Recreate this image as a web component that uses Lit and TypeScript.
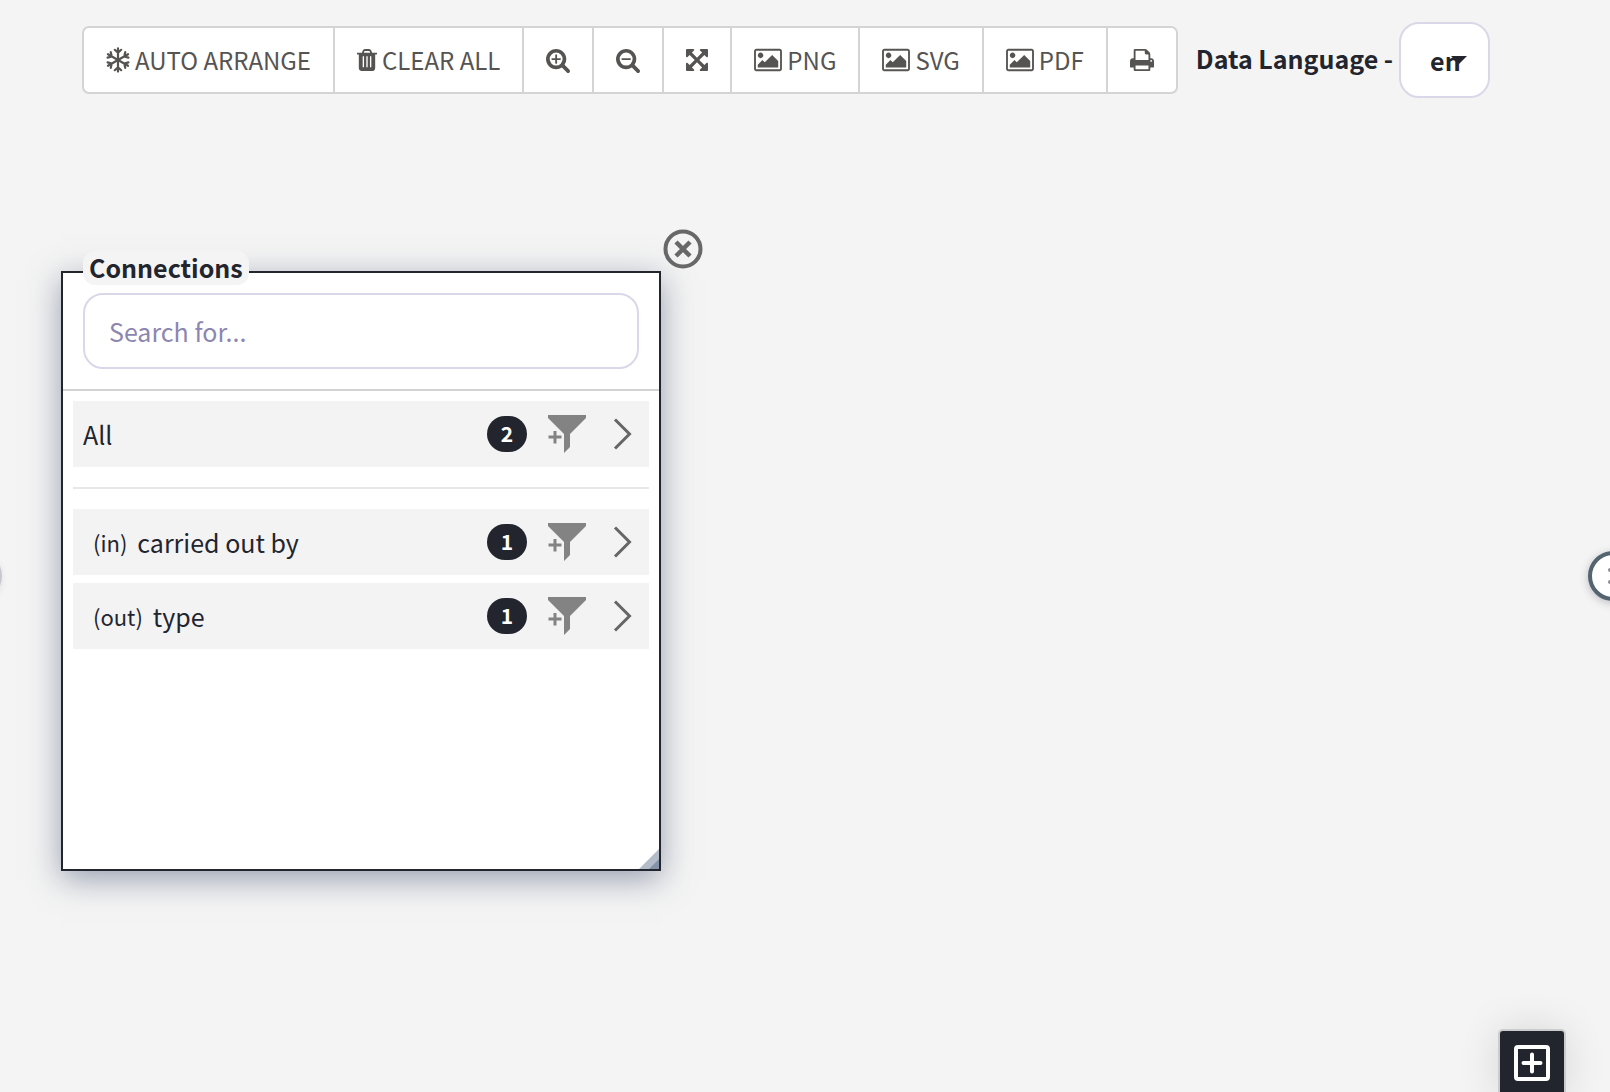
import { LitElement, html, css, svg } from "lit";
import { customElement, property, state } from "lit/decorators.js";

const glyphs = {
  trash: {
    box: "0 0 1408 1792",
    width: 20,
    d: "M496 1408v-768h-96v768zM752 1408v-768h-96v768zM1008 1408v-768h-96v768zM480 384h448l-48-117q-7-9-17-11h-317q-10 2-17 11zm928 32v64q0 14-9 23t-23 9h-96v948q0 83-47 143.5t-113 60.5h-832q-66 0-113-58.5t-47-141.5v-952h-96q-14 0-23-9t-9-23v-64q0-14 9-23t23-9h309l70-167q15-37 54-63t79-26h320q40 0 79 26t54 63l70 167h309q14 0 23 9t9 23z",
  },
  zoomIn: {
    box: "64 0 1664 1792",
    width: 24,
    d: "M1088 800v64q0 13-9.5 22.5t-22.5 9.5h-224v224q0 13-9.5 22.5t-22.5 9.5h-64q-13 0-22.5-9.5t-9.5-22.5v-224h-224q-13 0-22.5-9.5t-9.5-22.5v-64q0-13 9.5-22.5t22.5-9.5h224v-224q0-13 9.5-22.5t22.5-9.5h64q13 0 22.5 9.5t9.5 22.5v224h224q13 0 22.5 9.5t9.5 22.5zm128 32q0-185-131.5-316.5t-316.5-131.5-316.5 131.5-131.5 316.5 131.5 316.5 316.5 131.5 316.5-131.5 131.5-316.5zm512 832q0 53-37.5 90.5t-90.5 37.5q-54 0-90-38l-343-342q-179 124-399 124-143 0-273.5-55.5t-225-150-150-225-55.5-273.5 55.5-273.5 150-225 225-150 273.5-55.5 273.5 55.5 225 150 150 225 55.5 273.5q0 220-124 399l343 343q37 37 37 90z",
  },
  zoomOut: {
    box: "64 0 1664 1792",
    width: 24,
    d: "M1088 800v64q0 13-9.5 22.5t-22.5 9.5h-576q-13 0-22.5-9.5t-9.5-22.5v-64q0-13 9.5-22.5t22.5-9.5h576q13 0 22.5 9.5t9.5 22.5zm128 32q0-185-131.5-316.5t-316.5-131.5-316.5 131.5-131.5 316.5 131.5 316.5 316.5 131.5 316.5-131.5 131.5-316.5zm512 832q0 53-37.5 90.5t-90.5 37.5q-54 0-90-38l-343-342q-179 124-399 124-143 0-273.5-55.5t-225-150-150-225-55.5-273.5 55.5-273.5 150-225 225-150 273.5-55.5 273.5 55.5 225 150 150 225 55.5 273.5q0 220-124 399l343 343q37 37 37 90z",
  },
  expand: {
    box: "0 0 1536 1792",
    width: 22,
    d: "M1283 541l-355 355 355 355 144-144q29-31 70-14 39 17 39 59v448q0 26-19 45t-45 19h-448q-42 0-59-40-17-39 14-69l144-144-355-355-355 355 144 144q31 30 14 69-17 40-59 40h-448q-26 0-45-19t-19-45v-448q0-42 40-59 39-17 69 14l144 144 355-355-355-355-144 144q-19 19-45 19-12 0-24-5-40-17-40-59v-448q0-26 19-45t45-19h448q42 0 59 40 17 39-14 69l-144 144 355 355 355-355-144-144q-31-30-14-69 17-40 59-40h448q26 0 45 19t19 45v448q0 42-39 59-13 5-25 5-26 0-45-19z",
  },
  picture: {
    box: "0 0 1920 1792",
    width: 28,
    d: "M640 576q0 80-56 136t-136 56-136-56-56-136 56-136 136-56 136 56 56 136zm1024 384v448h-1408v-192l320-320 160 160 512-512zm96-704h-1600q-13 0-22.5 9.5t-9.5 22.5v1216q0 13 9.5 22.5t22.5 9.5h1600q13 0 22.5-9.5t9.5-22.5v-1216q0-13-9.5-22.5t-22.5-9.5zm160 32v1216q0 66-47 113t-113 47h-1600q-66 0-113-47t-47-113v-1216q0-66 47-113t113-47h1600q66 0 113 47t47 113z",
  },
  print: {
    box: "64 0 1664 1792",
    width: 24,
    d: "M448 1536h896v-256h-896v256zm0-640h896v-384h-160q-40 0-68-28t-28-68v-160h-640v640zm1152 64q0-26-19-45t-45-19-45 19-19 45 19 45 45 19 45-19 19-45zm128 0v416q0 13-9.5 22.5t-22.5 9.5h-224v160q0 40-28 68t-68 28h-960q-40 0-68-28t-28-68v-160h-224q-13 0-22.5-9.5t-9.5-22.5v-416q0-79 56.5-135.5t135.5-56.5h64v-544q0-40 28-68t68-28h672q40 0 88 20t76 48l152 152q28 28 48 76t20 88v256h64q79 0 135.5 56.5t56.5 135.5z",
  },
};

type GlyphName = keyof typeof glyphs;

const glyph = (name: GlyphName) => {
  const g = glyphs[name];
  return html`<svg width=${g.width} height="26" viewBox=${g.box} fill="currentColor" aria-hidden="true">
    <path d=${g.d}></path>
  </svg>`;
};

const snowflake = () => html`<svg width="24" height="26" viewBox="-12 -13 24 26" fill="none" stroke="currentColor" stroke-width="2.2" stroke-linecap="round" stroke-linejoin="round" aria-hidden="true">
  ${[0, 60, 120, 180, 240, 300].map(
    (a) => svg`<path transform="rotate(${a})" d="M0 0V-11.6M-3.2 -10.2L0 -7.2L3.2 -10.2"></path>`,
  )}
</svg>`;

const textFont = css`"Noto Sans CJK SC", "Noto Sans CJK JP", "Open Sans", sans-serif`;

@customElement("tool-bar")
class ToolBar extends LitElement {
  @state() private language = "en";

  static styles = css`
    :host {
      display: flex;
      align-items: center;
      gap: 18px;
      padding: 22px 20px 0 82px;
    }
    .group {
      display: flex;
      background: #fff;
      border: 2px solid #d4d4d4;
      border-radius: 7px;
    }
    .tool {
      display: flex;
      align-items: center;
      gap: 5px;
      height: 64px;
      margin: 0;
      padding: 0 22px;
      border: 0;
      border-left: 2px solid #d4d4d4;
      background: none;
      color: #555452;
      font: 24px/32px ${textFont};
      white-space: nowrap;
      cursor: pointer;
    }
    .tool:first-child {
      border-left: 0;
    }
    .tool svg {
      flex: none;
    }
    .language {
      display: flex;
      align-items: center;
      gap: 6px;
      color: #23252e;
      font: bold 25px/34px ${textFont};
      white-space: nowrap;
    }
    .language label {
      padding-bottom: 4px;
    }
    .picker {
      position: relative;
      display: flex;
    }
    select {
      appearance: none;
      width: 91px;
      height: 76px;
      padding: 0 0 0 29px;
      border: 2px solid #dad8e8;
      border-radius: 20px;
      background: #fff;
      color: inherit;
      font: inherit;
    }
    .caret {
      position: absolute;
      top: 34px;
      right: 23px;
      pointer-events: none;
    }
  `;

  render() {
    return html`
      <div class="group" role="toolbar" aria-label="Graph tools">
        <button class="tool" type="button">${snowflake()}AUTO ARRANGE</button>
        <button class="tool" type="button">${glyph("trash")}CLEAR ALL</button>
        <button class="tool" type="button" aria-label="Zoom in">${glyph("zoomIn")}</button>
        <button class="tool" type="button" aria-label="Zoom out">${glyph("zoomOut")}</button>
        <button class="tool" type="button" aria-label="Fit to screen">${glyph("expand")}</button>
        ${["PNG", "SVG", "PDF"].map(
          (kind) => html`<button class="tool" type="button">${glyph("picture")}${kind}</button>`,
        )}
        <button class="tool" type="button" aria-label="Print">${glyph("print")}</button>
      </div>
      <div class="language">
        <label for="language">Data Language -</label>
        <span class="picker">
          <select
            id="language"
            .value=${this.language}
            @change=${(e: Event) => (this.language = (e.target as HTMLSelectElement).value)}
          >
            <option value="en">en</option>
          </select>
          <svg class="caret" width="16" height="8" viewBox="0 0 16 8" fill="#23252e" aria-hidden="true">
            <path d="M0 0h16l-8 8z"></path>
          </svg>
        </span>
      </div>
    `;
  }
}

@customElement("connection-row")
class ConnectionRow extends LitElement {
  @property() direction = "";
  @property() label = "";
  @property({ type: Number }) count = 0;

  static styles = css`
    :host {
      display: flex;
      align-items: center;
      height: 66px;
      padding: 0 17px 0 10px;
      background: #f3f3f3;
      color: #23252e;
      font: 25px/34px ${textFont};
    }
    .name {
      flex: 1;
      display: flex;
      align-items: center;
      gap: 10px;
      min-width: 0;
    }
    .direction {
      padding-left: 10px;
      font-size: 22px;
      line-height: 32px;
    }
    .badge {
      min-width: 40px;
      height: 36px;
      border-radius: 18px;
      background: #23252e;
      color: #fff;
      font-size: 21px;
      font-weight: bold;
      line-height: 34px;
      text-align: center;
    }
    button {
      display: flex;
      margin: 0;
      padding: 0;
      border: 0;
      background: none;
      cursor: pointer;
    }
    .filter {
      margin: 0 26px 0 20px;
    }
  `;

  render() {
    return html`
      <span class="name">
        ${this.direction ? html`<span class="direction">(${this.direction})</span>` : null}
        <span>${this.label}</span>
      </span>
      <span class="badge">${this.count}</span>
      <button class="filter" type="button" aria-label="Add filter for ${this.label}">
        <svg width="40" height="40" viewBox="0 0 40 40" fill="#838383" aria-hidden="true">
          <path d="M1 1h38v3L23 20v13L17 39V20L1 4z"></path>
          <path d="M6.500 17h3v4.500h5v3h-5v5h-3v-5h-5v-3h5z"></path>
        </svg>
      </button>
      <button type="button" aria-label="Open ${this.label}">
        <svg width="19" height="34" viewBox="0 0 19 34" fill="none" stroke="#666" stroke-width="3" aria-hidden="true">
          <path d="M2 2.500L16.500 17L2 31.500"></path>
        </svg>
      </button>
    `;
  }
}

@customElement("connections-window")
class ConnectionsWindow extends LitElement {
  @state() private query = "";

  private rows = [
    { direction: "in", label: "carried out by", count: 1 },
    { direction: "out", label: "type", count: 1 },
  ];

  static styles = css`
    :host {
      display: block;
      position: relative;
      box-sizing: border-box;
      width: 600px;
      height: 600px;
      border: 2px solid #23252e;
      background: #fff;
      box-shadow: 0 8px 30px rgba(60, 76, 108, 0.5);
      color: #23252e;
      font: 25px/34px ${textFont};
    }
    h2 {
      position: absolute;
      top: -22px;
      left: 20px;
      margin: 0;
      padding: 0 6px 2px;
      border-radius: 12px;
      background: #f4f4f4;
      font: bold 25px/32px ${textFont};
    }
    .close {
      position: absolute;
      top: -44px;
      right: -44px;
      display: flex;
      margin: 0;
      padding: 0;
      border: 0;
      background: none;
      cursor: pointer;
    }
    .search {
      padding: 20px;
      border-bottom: 2px solid #d2d3d4;
    }
    input {
      display: block;
      box-sizing: border-box;
      width: 100%;
      height: 76px;
      padding: 0 24px;
      border: 2px solid #dad8e8;
      border-radius: 20px;
      background: #fff;
      color: inherit;
      font: inherit;
    }
    input::placeholder {
      color: #8c86b0;
      opacity: 1;
    }
    .list {
      display: flex;
      flex-direction: column;
      gap: 8px;
      padding: 10px;
    }
    hr {
      width: 100%;
      margin: 12px 0;
      border: 0;
      border-top: 2px solid #e6e7e8;
    }
    .grip {
      position: absolute;
      right: 0;
      bottom: 0;
      cursor: nwse-resize;
    }
  `;

  render() {
    const shown = this.rows.filter((r) => r.label.includes(this.query));
    return html`
      <h2>Connections</h2>
      <button class="close" type="button" aria-label="Close">
        <svg width="40" height="40" viewBox="0 0 40 40" fill="none" stroke="#686868" stroke-width="4" aria-hidden="true">
          <circle cx="20" cy="20" r="17.500"></circle>
          <path stroke-width="4.500" d="M13 13l14 14M27 13l-14 14"></path>
        </svg>
      </button>
      <div class="search">
        <input
          type="text"
          placeholder="Search for..."
          aria-label="Search connections"
          @input=${(e: Event) => (this.query = (e.target as HTMLInputElement).value)}
        />
      </div>
      <div class="list">
        <connection-row label="All" .count=${2}></connection-row>
        <hr />
        ${shown.map(
          (r) => html`<connection-row
            .direction=${r.direction}
            .label=${r.label}
            .count=${r.count}
          ></connection-row>`,
        )}
      </div>
      <svg class="grip" width="20" height="20" viewBox="0 0 20 20" aria-hidden="true">
        <path fill="#b4bcc9" d="M20 0v20H0z"></path>
        <path fill="#8593a8" d="M20 10v10H10z"></path>
      </svg>
    `;
  }
}

@customElement("app-root")
class AppRoot extends LitElement {
  static styles = css`
    :host {
      display: block;
      position: relative;
      min-height: 100vh;
      overflow: hidden;
      background: #f4f4f4;
    }
    .window {
      position: absolute;
      top: 271px;
      left: 61px;
    }
    .knob {
      position: absolute;
      top: 551px;
      display: flex;
      box-sizing: border-box;
      align-items: center;
      width: 50px;
      height: 50px;
      margin: 0;
      padding: 0 0 0 16px;
      border: 4px solid #546570;
      border-radius: 50%;
      background: #fff;
      box-shadow: 0 2px 8px rgba(60, 60, 90, 0.3);
      cursor: pointer;
    }
    .knob.left {
      left: -48px;
      border-color: #c9c8d0;
      box-shadow: 0 2px 6px rgba(60, 60, 90, 0.1);
    }
    .knob.right {
      right: -28px;
    }
    .add {
      position: absolute;
      right: 44px;
      bottom: -7px;
      display: flex;
      box-sizing: border-box;
      justify-content: center;
      width: 68px;
      height: 70px;
      margin: 0;
      padding: 14px 0 0;
      border: 2px solid #cbcccd;
      border-radius: 5px;
      background: #23252e;
      box-shadow: 0 0 40px rgba(0, 0, 0, 0.12);
      cursor: pointer;
    }
  `;

  render() {
    return html`
      <tool-bar></tool-bar>
      <connections-window class="window"></connections-window>
      <button class="knob left" type="button" aria-label="Open left panel"></button>
      <button class="knob right" type="button" aria-label="Open right panel">
        <svg width="16" height="16" viewBox="0 0 16 16" fill="#8a8d92" aria-hidden="true">
          <circle cx="2" cy="2" r="2"></circle>
          <circle cx="2" cy="14" r="2"></circle>
          <circle cx="10" cy="2" r="2"></circle>
          <circle cx="10" cy="14" r="2"></circle>
        </svg>
      </button>
      <button class="add" type="button" aria-label="Add">
        <svg width="36" height="36" viewBox="0 0 36 36" fill="none" stroke="#fff" stroke-width="4" aria-hidden="true">
          <rect x="2" y="2" width="32" height="32" rx="2"></rect>
          <path stroke-linecap="round" d="M18 9.500v17M9.500 18h17"></path>
        </svg>
      </button>
    `;
  }
}
